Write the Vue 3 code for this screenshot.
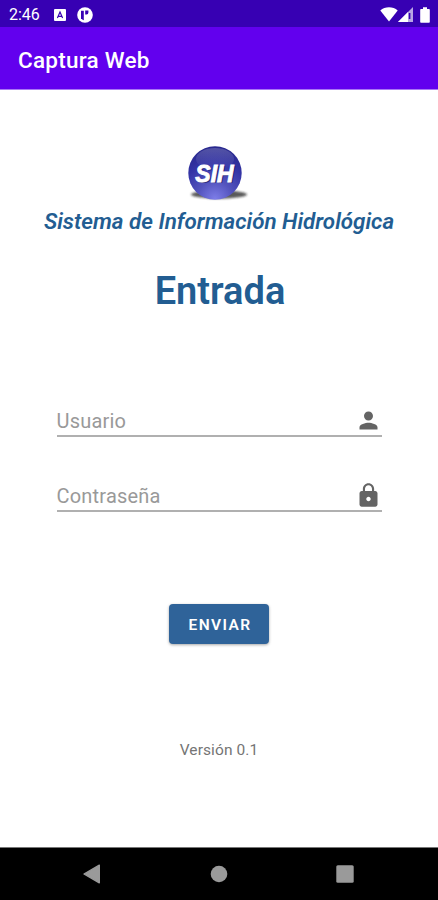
<template>
  <div class="screen">
    <div class="status-bar">
      <span class="time">2:46</span>
      <svg class="notif" width="12" height="12" viewBox="0 0 12 12">
        <rect width="12" height="12" rx="1" fill="#fff" />
        <path d="M3.4 9 L6 3 L8.6 9 M4.4 7.3 H7.6" fill="none" stroke="#3700b3" stroke-width="1.2" />
      </svg>
      <svg class="notif-round" width="16" height="16" viewBox="0 0 16 16">
        <circle cx="8" cy="8" r="7.8" fill="#fff" />
        <path d="M4 3.8 H6.8 V13.2 A6 6 0 0 1 4 11.2 Z" fill="#3700b3" />
        <path d="M8.2 3.4 H11.4 V5.4 A2 2 0 0 1 9.6 7.4 H8.2 Z" fill="#3700b3" />
      </svg>
      <div class="system-icons">
        <svg width="18" height="15" viewBox="0 0 18 15">
          <path d="M0.3 3.6 C5 -0.8 13 -0.8 17.7 3.6 L9 14.6 Z" fill="#fff" />
        </svg>
        <svg width="15" height="15" viewBox="0 0 15 15">
          <path d="M15 0 V15 H0 Z" fill="#fff" fill-opacity="0.65" />
          <path d="M10 5 V15 H0 Z" fill="#fff" />
          <path d="M10.8 6 H12.4 V12 H10.8 Z" fill="#3700b3" />
        </svg>
        <svg class="battery" width="10" height="16" viewBox="0 0 10 16">
          <path d="M3 0.3 H7 V2 H9 Q9.8 2 9.8 2.8 V15 Q9.8 15.7 9 15.7 H1 Q0.2 15.7 0.2 15 V2.8 Q0.2 2 1 2 H3 Z" fill="#fff" />
        </svg>
      </div>
    </div>
    <header class="app-bar">
      <h1>Captura Web</h1>
    </header>

    <main class="content">
      <svg class="logo" width="66" height="60" viewBox="0 0 66 60">
        <defs>
          <radialGradient id="ball" cx="0.5" cy="0.98" r="0.95">
            <stop offset="0" stop-color="#7d7de8" />
            <stop offset="0.35" stop-color="#5353bd" />
            <stop offset="0.7" stop-color="#3434a6" />
            <stop offset="1" stop-color="#28288e" />
          </radialGradient>
          <linearGradient id="gloss" x1="0" y1="0" x2="0" y2="1">
            <stop offset="0" stop-color="#fff" stop-opacity="0.2" />
            <stop offset="1" stop-color="#fff" stop-opacity="0" />
          </linearGradient>
          <filter id="soft" x="-20%" y="-60%" width="140%" height="220%">
            <feGaussianBlur stdDeviation="1.3" />
          </filter>
        </defs>
        <ellipse cx="33" cy="49.5" rx="28" ry="4" fill="#222" fill-opacity="0.75" filter="url(#soft)" />
        <circle cx="29" cy="28" r="26.7" fill="url(#ball)" />
        <ellipse cx="29" cy="14" rx="19" ry="11" fill="url(#gloss)" />
        <text class="logo-shadow" x="30" y="38" text-anchor="middle">SIH</text>
        <text class="logo-text" x="28.5" y="36.5" text-anchor="middle">SIH</text>
      </svg>
      <p class="subtitle">Sistema de Información Hidrológica</p>
      <h2>Entrada</h2>

      <form @submit.prevent>
        <div class="field">
          <input v-model="usuario" type="text" placeholder="Usuario" />
          <svg width="27" height="27" viewBox="0 0 24 24">
            <path d="M12 12c2.21 0 4-1.79 4-4s-1.79-4-4-4-4 1.79-4 4 1.79 4 4 4zm0 2c-2.67 0-8 1.34-8 4v2h16v-2c0-2.66-5.33-4-8-4z" />
          </svg>
        </div>
        <div class="field">
          <input v-model="password" type="password" placeholder="Contraseña" />
          <svg width="27" height="27" viewBox="0 0 24 24">
            <path d="M18 8h-1V6c0-2.76-2.24-5-5-5S7 3.24 7 6v2H6c-1.1 0-2 .9-2 2v10c0 1.1.9 2 2 2h12c1.1 0 2-.9 2-2V10c0-1.1-.9-2-2-2zm-6 9c-1.1 0-2-.9-2-2s.9-2 2-2 2 .9 2 2-.9 2-2 2zm3.1-9H8.9V6c0-1.71 1.39-3.1 3.1-3.1 1.71 0 3.1 1.39 3.1 3.1v2z" />
          </svg>
        </div>
        <button type="submit">ENVIAR</button>
      </form>
      <p class="version">Versión 0.1</p>
    </main>

    <nav class="nav-bar">
      <svg width="18" height="20" viewBox="0 0 18 20">
        <path d="M16.3 1.2 V18.8 L1 10 Z" stroke-width="1.4" stroke-linejoin="round" />
      </svg>
      <svg width="18" height="18" viewBox="0 0 18 18">
        <circle cx="9" cy="9" r="8.3" />
      </svg>
      <svg width="18" height="18" viewBox="0 0 18 18">
        <rect x="0.3" y="0.3" width="17.4" height="17.4" rx="1.5" />
      </svg>
    </nav>
  </div>
</template>

<script setup>
import { ref } from 'vue'

const usuario = ref('')
const password = ref('')
</script>

<style>
body {
  margin: 0;
}
</style>

<style scoped>
.screen {
  display: flex;
  flex-direction: column;
  width: 438px;
  height: 900px;
  overflow: hidden;
  background: #fff;
  font-family: Roboto, sans-serif;
}
.status-bar {
  display: flex;
  align-items: center;
  box-sizing: border-box;
  height: 27px;
  padding: 2px 8px 0 9px;
  background: #3700b3;
  color: #fff;
}
.time {
  width: 45px;
  font-size: 16px;
  line-height: 20px;
}
.notif-round {
  margin-left: 11px;
}
.system-icons {
  display: flex;
  align-items: center;
  margin-left: auto;
}
.battery {
  margin-left: 7px;
}
.app-bar {
  display: flex;
  align-items: center;
  box-sizing: border-box;
  height: 63px;
  padding: 3px 18px 0;
  background: #6200ee;
  border-bottom: 1px solid #a978f5;
}
h1 {
  margin: 0;
  color: #fff;
  font-size: 22.5px;
  font-weight: 500;
  letter-spacing: 0.25px;
}
.content {
  display: flex;
  flex: 1;
  flex-direction: column;
  align-items: center;
}
.logo {
  margin: 55px 0 0 -1px;
}
.logo text {
  font-family: "Liberation Sans", sans-serif;
  font-size: 23px;
  font-style: italic;
  font-weight: 700;
}
.logo-shadow {
  fill: #111150;
  fill-opacity: 0.6;
}
.logo-text {
  fill: #fff;
  stroke: #fff;
  stroke-width: 0.9;
}
.subtitle {
  margin: 2px 0 0;
  color: #225d92;
  font-size: 22.4px;
  font-style: italic;
  font-weight: 600;
  line-height: 28px;
  white-space: nowrap;
}
h2 {
  margin: 31px 0 0 2px;
  color: #225d92;
  font-size: 38px;
  font-weight: 600;
  line-height: 50px;
}
form {
  display: flex;
  flex-direction: column;
  align-items: center;
  width: 325px;
  margin-top: 85px;
}
.field {
  display: flex;
  align-items: center;
  box-sizing: border-box;
  width: 100%;
  height: 36px;
  margin-bottom: 39px;
  padding: 4px 0 0;
  border-bottom: 2px solid #b0b0b0;
}
.field svg {
  fill: #646464;
}
input {
  flex: 1;
  min-width: 0;
  padding: 1px 0 0;
  border: none;
  outline: none;
  background: none;
  font-family: inherit;
  font-size: 20px;
  letter-spacing: 0.2px;
}
input::placeholder {
  color: #999;
  opacity: 1;
}
button {
  width: 100px;
  height: 40px;
  margin-top: 53px;
  padding: 2px 0 0 2px;
  border: none;
  border-radius: 4px;
  background: #2f6399;
  box-shadow: 0 1px 3px rgba(0, 0, 0, 0.35);
  color: #fff;
  font-family: inherit;
  font-size: 15.5px;
  font-weight: 600;
  letter-spacing: 1.4px;
}
.version {
  margin: 96px 0 0;
  color: #757575;
  font-size: 15.5px;
  line-height: 20px;
  letter-spacing: 0.1px;
}
.nav-bar {
  display: flex;
  align-items: center;
  justify-content: space-between;
  box-sizing: border-box;
  height: 53px;
  padding: 0 84px 0 83px;
  background: #000;
  border-top: 1px solid #777;
}
.nav-bar svg {
  fill: #9a9a9a;
  stroke: #9a9a9a;
  stroke-width: 0;
}
</style>
